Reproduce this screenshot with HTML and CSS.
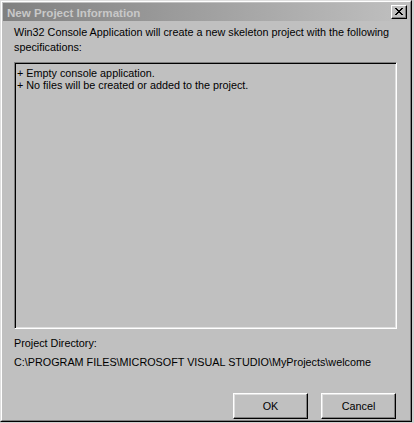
FILE: index.html
```html
<!DOCTYPE html>
<html>
<head>
<meta charset="utf-8">
<title>New Project Information</title>
<link rel="stylesheet" href="styles.css">
</head>
<body>
<div class="dialog">
  <div class="frame">
    <div class="titlebar">
      <span class="title">New Project Information</span>
      <button class="close" aria-label="Close">
        <svg width="8" height="7" viewBox="0 0 8 7" shape-rendering="crispEdges">
          <path fill="#000" d="M0 0h2v1H0zM6 0h2v1H6zM1 1h2v1H1zM5 1h2v1H5zM2 2h4v1H2zM3 3h2v1H3zM2 4h4v1H2zM1 5h2v1H1zM5 5h2v1H5zM0 6h2v1H0zM6 6h2v1H6z"/>
        </svg>
      </button>
    </div>
    <div class="content">
      <p class="message">Win32 Console Application will create a new skeleton project with the following specifications:</p>
      <div class="specs">
        <div>+ Empty console application.</div>
        <div>+ No files will be created or added to the project.</div>
      </div>
      <div class="dir">
        <div>Project Directory:</div>
        <div>C:\PROGRAM FILES\MICROSOFT VISUAL STUDIO\MyProjects\welcome</div>
      </div>
      <div class="buttons">
        <button class="btn">OK</button>
        <button class="btn">Cancel</button>
      </div>
    </div>
  </div>
</div>
</body>
</html>
```
FILE: styles.css
```css
html, body {
  margin: 0;
  padding: 0;
}
body {
  width: 414px;
  height: 423px;
  background: #d0d0d0;
  font-family: "Liberation Sans", Arial, sans-serif;
  font-size: 10.8px;
  color: #000;
  overflow: hidden;
}
.dialog {
  width: 412px;
  height: 422px;
  box-sizing: border-box;
  border: 1px solid;
  border-color: #dfdfdf #000 #000 #dfdfdf;
  background: #c0c0c0;
  display: flex;
}
.frame {
  flex: 1;
  border: 1px solid;
  border-color: #fff #808080 #808080 #fff;
  padding: 1px;
  display: flex;
  flex-direction: column;
}
.titlebar {
  height: 18px;
  flex: none;
  background: linear-gradient(to right, #808080, #c0c0c0);
  display: flex;
  align-items: center;
  justify-content: space-between;
  padding: 0 2px 0 4px;
}
.title {
  font-weight: bold;
  font-size: 11.6px;
  color: #c8c8c8;
}
.close {
  width: 16px;
  height: 14px;
  box-sizing: border-box;
  margin: 0;
  padding: 0;
  background: #c0c0c0;
  border: 1px solid;
  border-color: #fff #000 #000 #fff;
  box-shadow: inset -1px -1px 0 #808080;
  display: flex;
  align-items: center;
  justify-content: center;
}
.close svg {
  display: block;
  margin-left: -1px;
  margin-top: -1px;
}
.content {
  flex: 1;
  display: flex;
  flex-direction: column;
  padding: 0 12px 0 11px;
}
.message {
  margin: 4px 0 0;
  line-height: 15px;
  height: 30px;
}
.specs {
  margin-top: 7px;
  height: 267px;
  box-sizing: border-box;
  border: 1px solid;
  border-color: #808080 #fff #fff #808080;
  box-shadow: inset 1px 1px 0 #000, inset -1px -1px 0 #dfdfdf;
  padding: 4px 2px;
  line-height: 12px;
}
.dir {
  margin-top: 5px;
  line-height: 19px;
}
.buttons {
  margin-top: auto;
  display: flex;
  justify-content: flex-end;
  gap: 13px;
  padding-right: 1px;
}
.btn {
  width: 75px;
  height: 26px;
  box-sizing: border-box;
  margin: 0;
  padding: 0;
  font-family: "Liberation Sans", Arial, sans-serif;
  font-size: 10.8px;
  color: #000;
  background: #c0c0c0;
  border: 1px solid;
  border-color: #fff #000 #000 #fff;
  box-shadow: inset -1px -1px 0 #808080, inset 1px 1px 0 #dfdfdf;
}
```
